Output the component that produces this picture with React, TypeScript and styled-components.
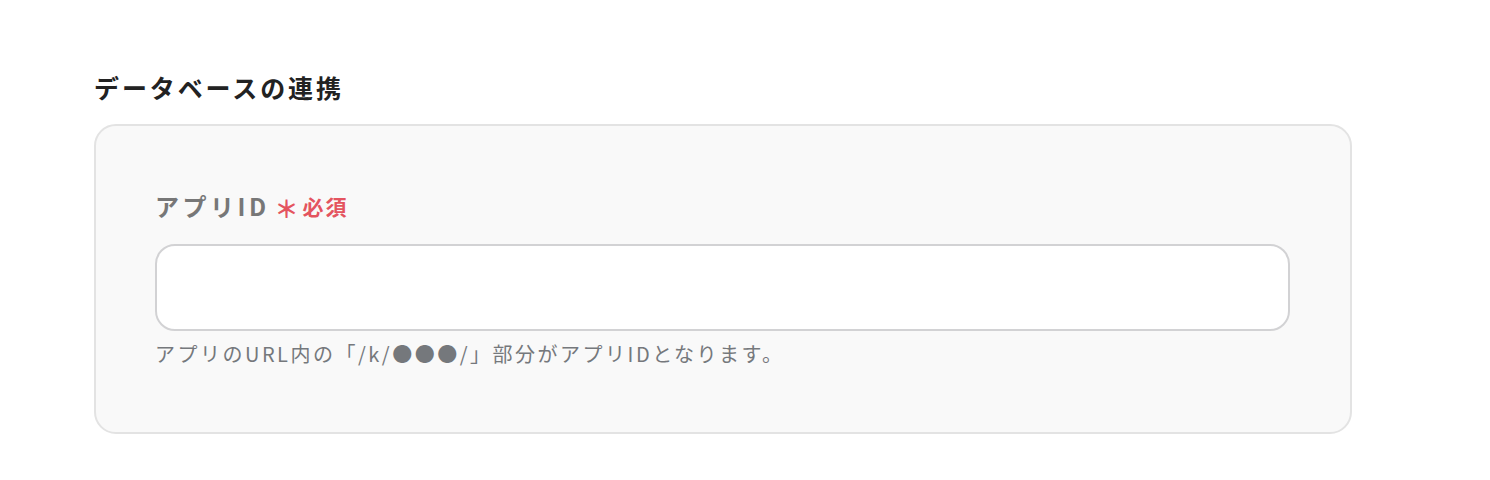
import React from 'react';
import styled, { createGlobalStyle } from 'styled-components';

const GlobalStyle = createGlobalStyle`
  body {
    margin: 0;
    background: #ffffff;
    font-family: "Noto Sans CJK JP", "Noto Sans", sans-serif;
  }
`;

const App: React.FC = () => {
  return (
    <>
      <GlobalStyle />
      <Page>
        <SectionTitle>データベースの連携</SectionTitle>
        <Card>
          <Label htmlFor="app-id">
            アプリID
            <Required>
              <Asterisk>＊</Asterisk>必須
            </Required>
          </Label>
          <Input id="app-id" type="text" />
          <HelpText>アプリのURL内の「/k/●●●/」部分がアプリIDとなります。</HelpText>
        </Card>
      </Page>
    </>
  );
};

export default App;

// Styled Components
const Page = styled.div`
  padding: 68px 0 0 94px;
  width: 1258px;
`;

const SectionTitle = styled.h2`
  margin: 0 0 18px;
  font-size: 25px;
  line-height: 38px;
  font-weight: 700;
  letter-spacing: 2.9px;
  color: #222;
`;

const Card = styled.div`
  display: flex;
  flex-direction: column;
  box-sizing: border-box;
  height: 310px;
  padding: 60px 60px 0 59px;
  border: 2px solid #e3e3e3;
  border-radius: 22px;
  background-color: #f9f9f9;
`;

const Label = styled.label`
  display: flex;
  align-items: center;
  font-size: 24px;
  line-height: 40px;
  font-weight: 700;
  letter-spacing: 3.5px;
  color: #777777;
  margin-bottom: 18px;
`;

const Required = styled.span`
  display: inline-flex;
  align-items: center;
  margin-left: 5px;
  font-size: 21px;
  letter-spacing: 2px;
  color: #e4545f;
`;

const Asterisk = styled.span`
  font-size: 24px;
  font-weight: 700;
  margin-right: 4px;
  letter-spacing: 0;
  transform: translateY(2px);
`;

const Input = styled.input`
  box-sizing: border-box;
  width: 100%;
  height: 87px;
  padding: 0 20px;
  border: 2px solid #d2d2d4;
  border-radius: 20px;
  background: #ffffff;
  font-size: 18px;
  outline: none;
`;

const HelpText = styled.p`
  margin: 8px 0 0;
  font-size: 20px;
  line-height: 30px;
  letter-spacing: 2.5px;
  color: #75787c;
`;
